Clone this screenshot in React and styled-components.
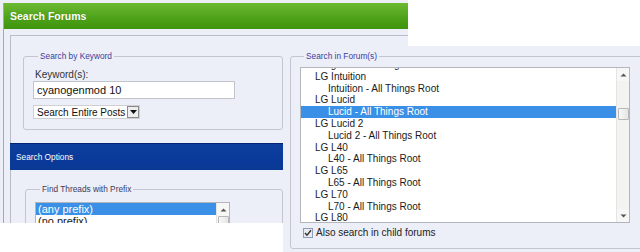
import React from 'react';
import styled, { createGlobalStyle } from 'styled-components';

const Global = createGlobalStyle`
  html, body { margin: 0; padding: 0; background: #ffffff; }
  body { font-family: "Liberation Sans", Arial, sans-serif; }
  * { box-sizing: border-box; }
`;

const Canvas = styled.div`
  position: relative;
  width: 640px;
  height: 252px;
  overflow: hidden;
  background: #eceef8;
  padding: 3px 0 0 3px;
`;

const Frame = styled.div`
  height: 100%;
  border-left: 1px solid #9ea6cc;
  display: flex;
  flex-direction: column;
`;

const Header = styled.div`
  height: 26px;
  flex: none;
  display: flex;
  align-items: center;
  padding-left: 6px;
  background: linear-gradient(#6dba33, #4fa31a 55%, #3f940e);
  color: #ffffff;
  font-weight: bold;
  font-size: 10.5px;
  text-shadow: 0 0 1px rgba(0, 60, 0, 0.4);
`;

const Body = styled.div`
  flex: 1;
  padding: 6px 0 0 6px;
  display: flex;
`;

const Panel = styled.div`
  flex: 1;
  border-top: 1px solid #b9bcc9;
  border-left: 1px solid #b9bcc9;
  display: grid;
  grid-template-columns: 272px 1fr;
  align-items: start;
`;

const LeftCol = styled.div`
  display: flex;
  flex-direction: column;
`;

const Section = styled.div`
  padding: ${(p) => p.$pad};
`;

const Group = styled.fieldset`
  margin: 0;
  border: 1px solid #c3c5cf;
  border-radius: 3px;
  padding: ${(p) => p.$pad};
  min-width: 0;
  width: ${(p) => p.$w || 'auto'};
`;

const Legend = styled.legend`
  margin-left: ${(p) => p.$ml || '5px'};
  padding: 0 2px;
  font-size: 8.3px;
  line-height: 10px;
  color: ${(p) => p.$color || '#3a3f98'};
`;

const Label = styled.div`
  font-size: 10px;
  line-height: 12px;
  color: #333;
  padding-left: 2px;
`;

const TextBox = styled.div`
  width: 202px;
  height: 18px;
  border: 1px solid #c2c4cc;
  background: #ffffff;
  font-size: 11px;
  line-height: 16px;
  padding-left: 3px;
  color: #111;
`;

const Select = styled.div`
  margin-top: 6px;
  width: 107px;
  height: 14px;
  border: 1px solid #cfd0d6;
  background: #ffffff;
  display: flex;
  align-items: center;
  justify-content: space-between;
  font-size: 10px;
  color: #111;
  padding-left: 3px;
`;

const DropBtn = styled.div`
  width: 12px;
  height: 12px;
  border: 1px solid #8a8a8a;
  background: #eeeeee;
  display: flex;
  align-items: center;
  justify-content: center;
`;

const OptionsBar = styled.div`
  margin: 13px 0 0 -1px;
  width: 273px;
  height: 27px;
  border-top: 1px solid #022675;
  background: linear-gradient(#0e3f9f, #093a9a 60%, #0a3995);
  color: #ffffff;
  font-size: 8.3px;
  display: flex;
  align-items: center;
  padding-left: 6px;
`;

const ListBox = styled.div`
  width: ${(p) => p.$w};
  height: ${(p) => p.$h};
  border: 1px solid #b4b6be;
  background: #ffffff;
  display: flex;
  overflow: hidden;
`;

const Rows = styled.div`
  flex: 1;
  overflow: hidden;
`;

const RowsInner = styled.div`
  margin-top: ${(p) => p.$offset || '0px'};
`;

const Row = styled.div`
  height: ${(p) => p.$h};
  line-height: ${(p) => p.$h};
  font-size: ${(p) => p.$fs};
  padding-left: ${(p) => p.$indent};
  white-space: nowrap;
  color: ${(p) => (p.$sel ? '#ffffff' : '#1a1a1a')};
  background: ${(p) => (p.$sel ? '#3a90e6' : 'transparent')};
`;

const Scroll = styled.div`
  width: 13px;
  flex: none;
  display: flex;
  flex-direction: column;
  background: #f3f3f1;
  border-left: 1px solid #e4e4e4;
`;

const ArrowBtn = styled.div`
  height: 13px;
  flex: none;
  display: flex;
  align-items: center;
  justify-content: center;
  background: #f7f7f5;
`;

const Track = styled.div`
  flex: 1;
  display: flex;
  flex-direction: column;
  align-items: center;
`;

const Thumb = styled.div`
  margin-top: ${(p) => p.$top};
  width: 11px;
  height: 12px;
  border: 1px solid #b8b8b8;
  border-radius: 1px;
  background: linear-gradient(90deg, #f8f8f8, #e6e6e6);
`;

const RightCol = styled.div`
  padding: 15px 0 0 7px;
`;

const CheckRow = styled.label`
  display: flex;
  align-items: center;
  gap: 3px;
  margin: 4px 0 0 3px;
  font-size: 10px;
  color: #222;
`;

const CheckBox = styled.span`
  width: 10px;
  height: 10px;
  border: 1px solid #8f9bb8;
  background: #e9ebf2;
  display: flex;
  align-items: center;
  justify-content: center;
`;

const Mask = styled.div`
  position: absolute;
  background: #ffffff;
  left: ${(p) => p.$l}px;
  top: ${(p) => p.$t}px;
  width: ${(p) => p.$w}px;
  height: ${(p) => p.$h}px;
`;

const Up = () => (
  <svg width="7" height="4" viewBox="0 0 7 4">
    <path d="M0.5 3.5 L3.5 0.5 L6.5 3.5 Z" fill="#555" />
  </svg>
);
const Down = () => (
  <svg width="7" height="4" viewBox="0 0 7 4">
    <path d="M0.5 0.5 L3.5 3.5 L6.5 0.5 Z" fill="#555" />
  </svg>
);

const forumRows = [
  { t: 'Ignite - All Things Root', c: true },
  { t: 'LG Intuition' },
  { t: 'Intuition - All Things Root', c: true },
  { t: 'LG Lucid' },
  { t: 'Lucid - All Things Root', c: true, sel: true },
  { t: 'LG Lucid 2' },
  { t: 'Lucid 2 - All Things Root', c: true },
  { t: 'LG L40' },
  { t: 'L40 - All Things Root', c: true },
  { t: 'LG L65' },
  { t: 'L65 - All Things Root', c: true },
  { t: 'LG L70' },
  { t: 'L70 - All Things Root', c: true },
  { t: 'LG L80' },
];

const prefixRows = [
  { t: '(any prefix)', sel: true },
  { t: '(no prefix)' },
];

export default function App() {
  return (
    <>
      <Global />
      <Canvas>
        <Frame>
          <Header>Search Forums</Header>
          <Body>
            <Panel>
              <LeftCol>
                <Section $pad="15px 0 0 12px">
                  <Group $pad="8px 0 10px 9px">
                    <Legend>Search by Keyword</Legend>
                    <Label>Keyword(s):</Label>
                    <TextBox>cyanogenmod 10</TextBox>
                    <Select>
                      Search Entire Posts
                      <DropBtn>
                        <svg width="7" height="4" viewBox="0 0 7 4">
                          <path d="M0 0 L7 0 L3.5 4 Z" fill="#111" />
                        </svg>
                      </DropBtn>
                    </Select>
                  </Group>
                </Section>
                <OptionsBar>Search Options</OptionsBar>
                <Section $pad="14px 0 0 14px">
                  <Group $pad="8px 0 10px 9px">
                    <Legend $color="#3b3d5c">Find Threads with Prefix</Legend>
                    <ListBox $w="195px" $h="60px">
                      <Rows>
                        <RowsInner>
                          {prefixRows.map((r) => (
                            <Row key={r.t} $h="12px" $fs="11px" $indent="2px" $sel={r.sel}>
                              {r.t}
                            </Row>
                          ))}
                        </RowsInner>
                      </Rows>
                      <Scroll>
                        <ArrowBtn><Up /></ArrowBtn>
                        <Track>
                          <Thumb $top="0px" />
                        </Track>
                      </Scroll>
                    </ListBox>
                  </Group>
                </Section>
              </LeftCol>
              <RightCol>
                <Group $pad="6px 0 10px 9px" $w="370px">
                  <Legend $ml="4px">Search in Forum(s)</Legend>
                  <ListBox $w="330px" $h="156px">
                    <Rows>
                      <RowsInner $offset="-9px">
                        {forumRows.map((r) => (
                          <Row
                            key={r.t}
                            $h="11.8px"
                            $fs="10px"
                            $indent={r.c ? '27px' : '14px'}
                            $sel={r.sel}
                          >
                            {r.t}
                          </Row>
                        ))}
                      </RowsInner>
                    </Rows>
                    <Scroll>
                      <ArrowBtn><Up /></ArrowBtn>
                      <Track>
                        <Thumb $top="27px" />
                      </Track>
                      <ArrowBtn><Down /></ArrowBtn>
                    </Scroll>
                  </ListBox>
                  <CheckRow>
                    <CheckBox>
                      <svg width="8" height="8" viewBox="0 0 8 8">
                        <path d="M1 4 L3 6.2 L7 1.2" fill="none" stroke="#333" strokeWidth="1.4" />
                      </svg>
                    </CheckBox>
                    Also search in child forums
                  </CheckRow>
                </Group>
              </RightCol>
            </Panel>
          </Body>
        </Frame>
        <Mask $l={408} $t={0} $w={232} $h={46} />
        <Mask $l={0} $t={223} $w={283} $h={29} />
      </Canvas>
    </>
  );
}
